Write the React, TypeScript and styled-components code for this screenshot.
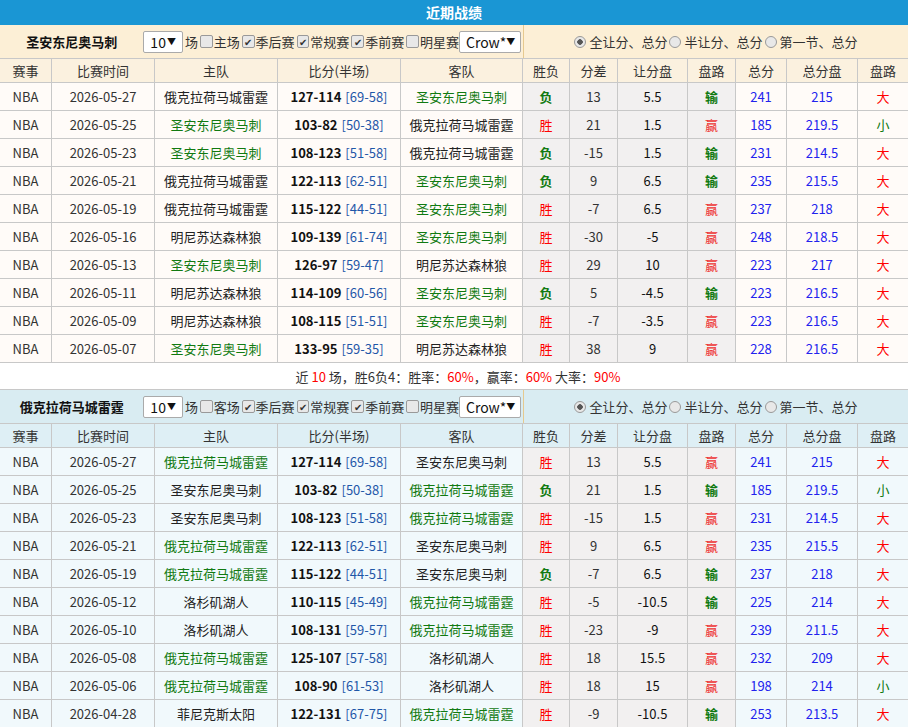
import React from "react";
import styled, { createGlobalStyle } from "styled-components";

const GlobalStyle = createGlobalStyle`
  body {
    margin: 0;
    font-family: "Noto Sans CJK SC", "Noto Sans", sans-serif;
    font-size: 13px;
    color: #333;
    background: #fff;
  }
`;

type Match = [string, string, string, string, string, string, string, string, string, string, string, string];
// date, home, away, score, half, result, diff, handicap, hcResult, total, totalLine, ou

const spursRows: Match[] = [
  ["2026-05-27", "俄克拉荷马城雷霆", "圣安东尼奥马刺", "127-114", "69-58", "负", "13", "5.5", "输", "241", "215", "大"],
  ["2026-05-25", "圣安东尼奥马刺", "俄克拉荷马城雷霆", "103-82", "50-38", "胜", "21", "1.5", "赢", "185", "219.5", "小"],
  ["2026-05-23", "圣安东尼奥马刺", "俄克拉荷马城雷霆", "108-123", "51-58", "负", "-15", "1.5", "输", "231", "214.5", "大"],
  ["2026-05-21", "俄克拉荷马城雷霆", "圣安东尼奥马刺", "122-113", "62-51", "负", "9", "6.5", "输", "235", "215.5", "大"],
  ["2026-05-19", "俄克拉荷马城雷霆", "圣安东尼奥马刺", "115-122", "44-51", "胜", "-7", "6.5", "赢", "237", "218", "大"],
  ["2026-05-16", "明尼苏达森林狼", "圣安东尼奥马刺", "109-139", "61-74", "胜", "-30", "-5", "赢", "248", "218.5", "大"],
  ["2026-05-13", "圣安东尼奥马刺", "明尼苏达森林狼", "126-97", "59-47", "胜", "29", "10", "赢", "223", "217", "大"],
  ["2026-05-11", "明尼苏达森林狼", "圣安东尼奥马刺", "114-109", "60-56", "负", "5", "-4.5", "输", "223", "216.5", "大"],
  ["2026-05-09", "明尼苏达森林狼", "圣安东尼奥马刺", "108-115", "51-51", "胜", "-7", "-3.5", "赢", "223", "216.5", "大"],
  ["2026-05-07", "圣安东尼奥马刺", "明尼苏达森林狼", "133-95", "59-35", "胜", "38", "9", "赢", "228", "216.5", "大"],
];

const thunderRows: Match[] = [
  ["2026-05-27", "俄克拉荷马城雷霆", "圣安东尼奥马刺", "127-114", "69-58", "胜", "13", "5.5", "赢", "241", "215", "大"],
  ["2026-05-25", "圣安东尼奥马刺", "俄克拉荷马城雷霆", "103-82", "50-38", "负", "21", "1.5", "输", "185", "219.5", "小"],
  ["2026-05-23", "圣安东尼奥马刺", "俄克拉荷马城雷霆", "108-123", "51-58", "胜", "-15", "1.5", "赢", "231", "214.5", "大"],
  ["2026-05-21", "俄克拉荷马城雷霆", "圣安东尼奥马刺", "122-113", "62-51", "胜", "9", "6.5", "赢", "235", "215.5", "大"],
  ["2026-05-19", "俄克拉荷马城雷霆", "圣安东尼奥马刺", "115-122", "44-51", "负", "-7", "6.5", "输", "237", "218", "大"],
  ["2026-05-12", "洛杉矶湖人", "俄克拉荷马城雷霆", "110-115", "45-49", "胜", "-5", "-10.5", "输", "225", "214", "大"],
  ["2026-05-10", "洛杉矶湖人", "俄克拉荷马城雷霆", "108-131", "59-57", "胜", "-23", "-9", "赢", "239", "211.5", "大"],
  ["2026-05-08", "俄克拉荷马城雷霆", "洛杉矶湖人", "125-107", "57-58", "胜", "18", "15.5", "赢", "232", "209", "大"],
  ["2026-05-06", "俄克拉荷马城雷霆", "洛杉矶湖人", "108-90", "61-53", "胜", "18", "15", "赢", "198", "214", "小"],
  ["2026-04-28", "菲尼克斯太阳", "俄克拉荷马城雷霆", "122-131", "67-75", "胜", "-9", "-10.5", "输", "253", "213.5", "大"],
];

const COLS = "52px 103px 123px 123px 122px 47px 48px 70px 48px 51px 71px 50px";

const Title = styled.div`
  background: #1a96d4;
  color: #fff;
  font-weight: bold;
  font-size: 14px;
  height: 25px;
  line-height: 25px;
  text-align: center;
`;

const Controls = styled.div<{ $bg: string }>`
  display: grid;
  grid-template-columns: 524px 1fr;
  height: 34px;
  background: ${(p) => p.$bg};
  border-bottom: 1px solid #c8c8c8;
  box-sizing: border-box;
`;

const LeftCtl = styled.div`
  display: flex;
  align-items: center;
  border-right: 1px solid #e6c98f;
  white-space: nowrap;
`;

const TeamName = styled.div`
  font-weight: bold;
  width: 146px;
  text-align: center;
  color: #111;
`;

const Select = styled.div<{ $w: number }>`
  display: inline-flex;
  align-items: center;
  justify-content: space-between;
  width: ${(p) => p.$w}px;
  height: 22px;
  padding: 0 6px;
  box-sizing: border-box;
  border: 1px solid #aaa;
  border-radius: 2px;
  background: #fff;
  font-size: 14px;
  color: #111;
  margin-right: 2px;
  &::after {
    content: "▼";
    font-size: 9px;
  }
`;

const Box = styled.span`
  display: inline-flex;
  align-items: center;
  justify-content: center;
  width: 11px;
  height: 11px;
  border: 1px solid #999;
  border-radius: 2px;
  background: #e8e8e8;
  font-size: 10px;
  line-height: 1;
  margin: 0 1px 0 2px;
  color: #333;
`;

const Radio = styled.span<{ $on?: boolean }>`
  display: inline-block;
  width: 10px;
  height: 10px;
  border: 1px solid #999;
  border-radius: 50%;
  background: ${(p) => (p.$on ? "radial-gradient(circle, #555 0 2.5px, #e8e8e8 3px)" : "#e8e8e8")};
  margin-right: 1px;
`;

const RightCtl = styled.div`
  display: flex;
  align-items: center;
  justify-content: center;
  gap: 2px;
  color: #333;
`;

const Row = styled.div<{ $bg: string }>`
  display: grid;
  grid-template-columns: ${COLS};
  height: 28px;
  background: ${(p) => p.$bg};
  border-bottom: 1px solid #c8c8c8;
  box-sizing: border-box;
`;

const HeadRow = styled(Row)`
  height: 24px;
`;

const Cell = styled.div<{ $c?: string; $grey?: boolean; $bold?: boolean }>`
  display: flex;
  align-items: center;
  justify-content: center;
  border-right: 1px solid #c8c8c8;
  color: ${(p) => p.$c || "#333"};
  background: ${(p) => (p.$grey ? "#f2f0f0" : "transparent")};
  font-weight: ${(p) => (p.$bold ? "bold" : "normal")};
  white-space: nowrap;
  &:last-child {
    border-right: none;
  }
`;

const Half = styled.span`
  color: #1f57a8;
  margin-left: 4px;
  font-weight: normal;
`;

const Summary = styled.div`
  height: 27px;
  line-height: 27px;
  text-align: center;
  border-bottom: 1px solid #c8c8c8;
  box-sizing: border-box;
  color: #333;
  padding-left: 8px;
  & b {
    color: #f00;
    font-weight: normal;
  }
`;

const heads = ["赛事", "比赛时间", "主队", "比分(半场)", "客队", "胜负", "分差", "让分盘", "盘路", "总分", "总分盘", "盘路"];
const GREEN = "#117a11";
const RED = "#f00";
const BLUE = "#2222ee";

function Section({ team, home, rows, ctlBg, headBg, rowBg }: { team: string; home: string; rows: Match[]; ctlBg: string; headBg: string; rowBg: string }) {
  return (
    <>
      <Controls $bg={ctlBg}>
        <LeftCtl>
          <TeamName>{team}</TeamName>
          <Select $w={40}>10</Select>
          场<Box />{home}<Box>✔</Box>季后赛<Box>✔</Box>常规赛<Box>✔</Box>季前赛<Box />明星赛
          <Select $w={62}>Crow*</Select>
        </LeftCtl>
        <RightCtl>
          <Radio $on />全让分、总分 <Radio />半让分、总分 <Radio />第一节、总分
        </RightCtl>
      </Controls>
      <HeadRow $bg={headBg}>
        {heads.map((h, i) => (
          <Cell key={i}>{h}</Cell>
        ))}
      </HeadRow>
      {rows.map((r, i) => (
        <Row key={i} $bg={rowBg}>
          <Cell>NBA</Cell>
          <Cell>{r[0]}</Cell>
          <Cell $c={r[1] === team ? GREEN : "#222"}>{r[1]}</Cell>
          <Cell $bold $c="#111">
            {r[3]}
            <Half>[{r[4]}]</Half>
          </Cell>
          <Cell $c={r[2] === team ? GREEN : "#222"}>{r[2]}</Cell>
          <Cell $grey $bold={r[5] === "负"} $c={r[5] === "胜" ? RED : GREEN}>{r[5]}</Cell>
          <Cell $grey>{r[6]}</Cell>
          <Cell $grey $c="#111">{r[7]}</Cell>
          <Cell $grey $bold={r[8] === "输"} $c={r[8] === "赢" ? "#e33" : GREEN}>{r[8]}</Cell>
          <Cell $c={BLUE}>{r[9]}</Cell>
          <Cell $c={BLUE}>{r[10]}</Cell>
          <Cell $c={r[11] === "大" ? RED : GREEN}>{r[11]}</Cell>
        </Row>
      ))}
    </>
  );
}

export default function App() {
  return (
    <>
      <GlobalStyle />
      <Title>近期战绩</Title>
      <Section team="圣安东尼奥马刺" home="主场" rows={spursRows} ctlBg="#fcefd6" headBg="#fbf1df" rowBg="#fffbf8" />
      <Summary>
        近 <b>10</b> 场，胜6负4：胜率：<b>60%</b>，赢率：<b>60%</b> 大率：<b>90%</b>
      </Summary>
      <Section team="俄克拉荷马城雷霆" home="客场" rows={thunderRows} ctlBg="#d9ecf2" headBg="#deeff5" rowBg="#f1f9fc" />
    </>
  );
}
